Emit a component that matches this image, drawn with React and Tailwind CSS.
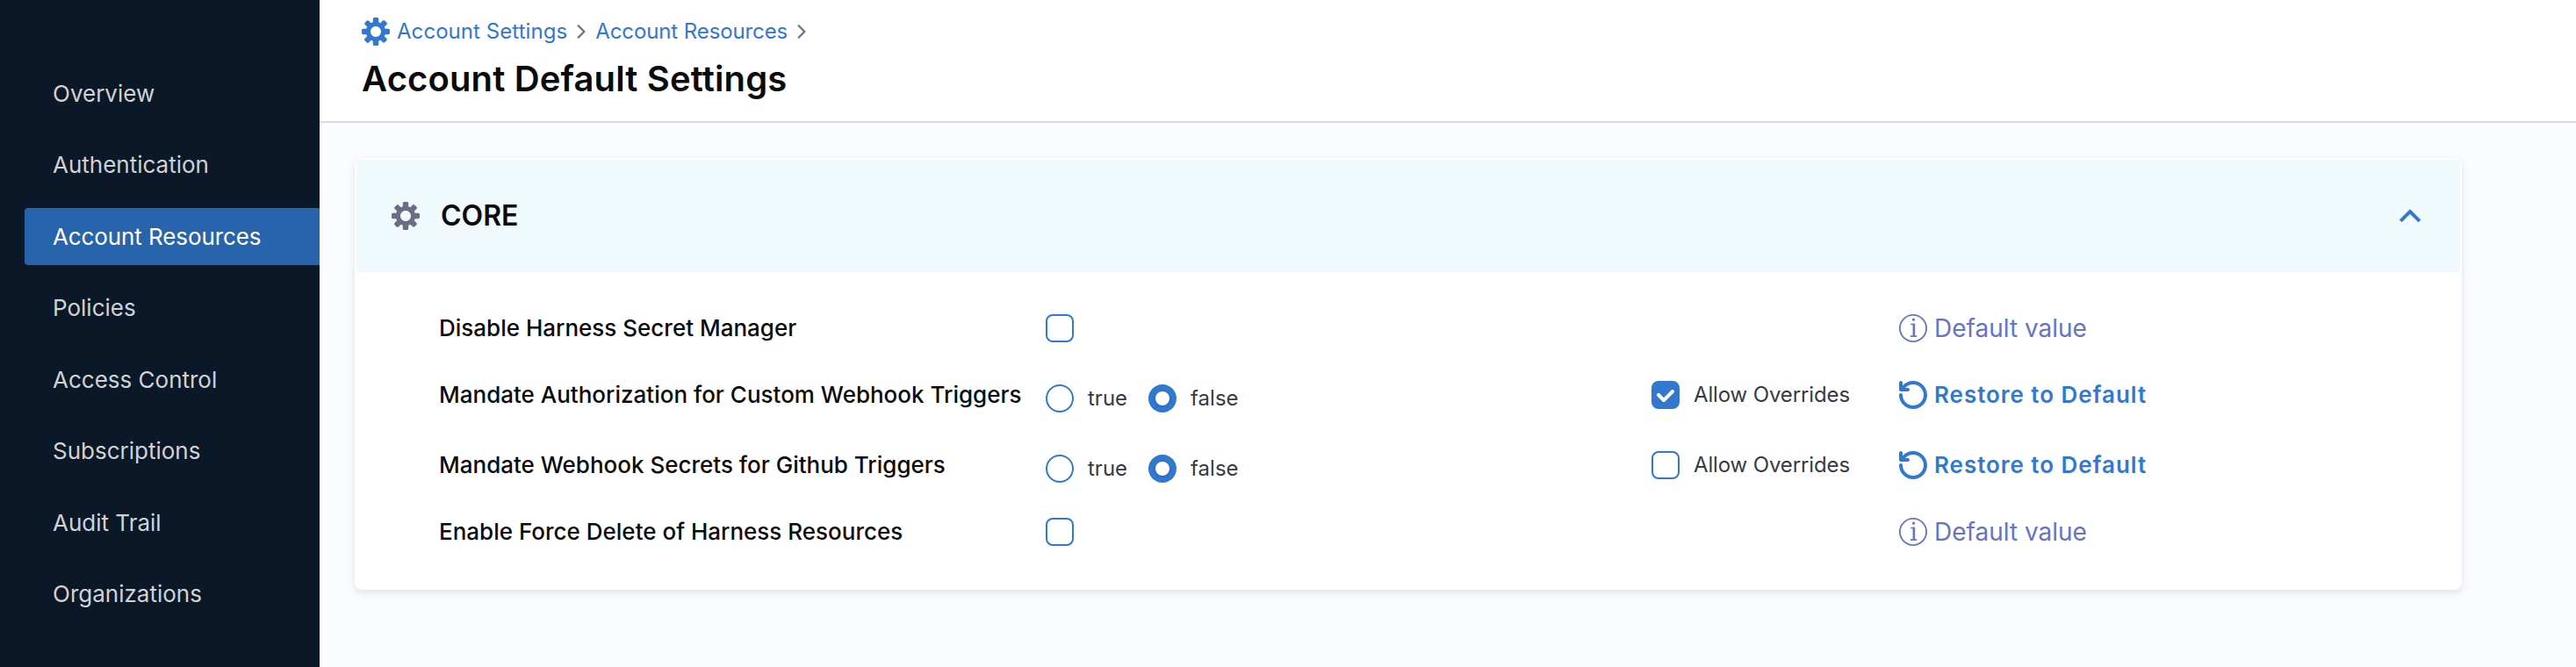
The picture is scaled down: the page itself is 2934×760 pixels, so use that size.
import clsx from "clsx";

const NAV = [
  "Overview",
  "Authentication",
  "Account Resources",
  "Policies",
  "Access Control",
  "Subscriptions",
  "Audit Trail",
  "Organizations",
];

const SETTINGS = [
  { label: "Disable Harness Secret Manager", type: "checkbox", height: "h-19" },
  { label: "Mandate Authorization for Custom Webhook Triggers", type: "radio", overrides: true, height: "h-19" },
  { label: "Mandate Webhook Secrets for Github Triggers", type: "radio", overrides: false, height: "h-21" },
  { label: "Enable Force Delete of Harness Resources", type: "checkbox", height: "h-17" },
];

function GearIcon({ className }) {
  return (
    <svg viewBox="0 0 16 16" fill="currentColor" className={clsx("size-8 shrink-0", className)}>
      <path
        fillRule="evenodd"
        clipRule="evenodd"
        d="M15.19 6.39h-1.85c-.11-.37-.27-.71-.45-1.04l1.36-1.36c.31-.31.31-.82 0-1.13l-1.13-1.13a.803.803 0 00-1.13 0l-1.36 1.36c-.33-.17-.67-.33-1.04-.44V.79c0-.44-.36-.8-.8-.8h-1.6c-.44 0-.8.36-.8.8v1.86c-.39.12-.75.28-1.1.47l-1.3-1.3c-.3-.3-.79-.3-1.09 0L1.82 2.91c-.3.3-.3.79 0 1.09l1.3 1.3c-.2.34-.36.7-.48 1.09H.79c-.44 0-.8.36-.8.8v1.6c0 .44.36.8.8.8h1.85c.11.37.27.71.45 1.04l-1.36 1.36c-.31.31-.31.82 0 1.13l1.13 1.13c.31.31.82.31 1.13 0l1.36-1.36c.33.18.67.33 1.04.44v1.86c0 .44.36.8.8.8h1.6c.44 0 .8-.36.8-.8v-1.86c.39-.12.75-.28 1.1-.47l1.3 1.3c.3.3.79.3 1.09 0l1.09-1.09c.3-.3.3-.79 0-1.09l-1.3-1.3c.19-.35.36-.71.48-1.1h1.85c.44 0 .8-.36.8-.8v-1.6a.816.816 0 00-.81-.79zm-7.2 4.6c-1.66 0-3-1.34-3-3s1.34-3 3-3 3 1.34 3 3-1.34 3-3 3z"
      />
    </svg>
  );
}

function CrumbChevron() {
  return (
    <svg viewBox="0 0 10 16" className="h-4 w-2.5 shrink-0 text-[#6b6d85]" fill="none" stroke="currentColor" strokeWidth="2.2" strokeLinecap="round" strokeLinejoin="round">
      <path d="M1.7 1.3 8.4 8l-6.7 6.7" />
    </svg>
  );
}

function ResetIcon() {
  return (
    <svg viewBox="0 0 16 16" fill="currentColor" className="size-8 shrink-0">
      <path d="M8 0C5.6 0 3.5 1 2 2.7V1c0-.5-.5-1-1-1S0 .4 0 1v4c0 .5.5 1 1 1h4c.6 0 1-.5 1-1s-.4-1-1-1H3.5C4.7 2.8 6.2 2 8 2c3.3 0 6 2.7 6 6s-2.7 6-6 6-6-2.7-6-6c0-.5-.4-1-1-1s-1 .5-1 1c0 4.4 3.6 8 8 8s8-3.6 8-8-3.6-8-8-8z" />
    </svg>
  );
}

function InfoIcon() {
  return (
    <svg viewBox="0 0 32 32" className="size-8 shrink-0" fill="none" stroke="currentColor">
      <circle cx="16" cy="16" r="15.1" strokeWidth="1.8" />
      <path d="M13.2 11.5h4M12.8 25.1h7.4" strokeWidth="1.7" />
      <path d="M16.9 10.7v14.6" strokeWidth="2.6" />
      <circle cx="16.5" cy="6.2" r="1.6" fill="currentColor" stroke="none" />
    </svg>
  );
}

function Checkbox({ checked }) {
  return (
    <span
      className={clsx(
        "flex size-8 shrink-0 items-center justify-center rounded-lg",
        checked ? "bg-[#3178d0] text-white" : "border-2 border-[#3178d0] bg-white"
      )}
    >
      {checked && (
        <svg viewBox="0 0 16 16" fill="currentColor" className="size-8">
          <path d="M12 5c-.28 0-.53.11-.71.29L7 9.59l-2.29-2.3a1.003 1.003 0 00-1.42 1.42l3 3c.18.18.43.29.71.29s.53-.11.71-.29l5-5A1.003 1.003 0 0012 5z" />
        </svg>
      )}
    </span>
  );
}

function Radio({ label, checked }) {
  return (
    <span className="flex items-center gap-4">
      <span
        className={clsx(
          "flex size-8 items-center justify-center rounded-full",
          checked ? "bg-[#3178d0]" : "border-2 border-[#3178d0] bg-white"
        )}
      >
        {checked && <span className="size-4 rounded-full bg-white shadow-[0_1px_3px_rgba(16,22,26,0.25)]" />}
      </span>
      <span className="pb-px text-[24px] leading-[29px] text-[#383946]">{label}</span>
    </span>
  );
}

function SettingRow({ label, type, overrides, height }) {
  return (
    <div className={clsx("flex items-center pl-[94px]", height)}>
      <div className="w-[691px] pb-px text-[26px] leading-[31px] font-medium whitespace-nowrap text-[#0b0b0d]">{label}</div>
      <div className="w-[690px]">
        {type === "checkbox" ? (
          <Checkbox />
        ) : (
          <div className="flex gap-6 pt-2">
            <Radio label="true" />
            <Radio label="false" checked />
          </div>
        )}
      </div>
      <div className="w-[282px]">
        {type === "radio" && (
          <div className="flex items-center gap-4">
            <Checkbox checked={overrides} />
            <span className="pb-px text-[24px] leading-[29px] tracking-[-0.13px] text-[#383946]">Allow Overrides</span>
          </div>
        )}
      </div>
      {type === "radio" ? (
        <div className="flex items-center gap-2 text-[#3178d0]">
          <ResetIcon />
          <span className="pb-px text-[26px] leading-[31px] font-semibold tracking-[0.95px]">Restore to Default</span>
        </div>
      ) : (
        <div className="flex items-center gap-2 text-[#6574c9]">
          <InfoIcon />
          <span className="text-[28px] leading-[34px]">Default value</span>
        </div>
      )}
    </div>
  );
}

export default function App() {
  return (
    <div className="flex h-[760px] w-full overflow-hidden bg-[#fbfcff] font-['Inter',sans-serif]">
      <aside className="flex w-[364px] shrink-0 flex-col gap-[16.5px] bg-[#0b1828] pt-[73.9px] pl-7">
        {NAV.map((item) => (
          <a
            key={item}
            className={clsx(
              "flex h-[65px] shrink-0 items-center rounded-l pl-8 text-[26px] leading-[31px]",
              item === "Account Resources" ? "bg-[#2864ab] tracking-[-0.1px] text-white" : "text-[#d0d2d4]"
            )}
          >
            {item}
          </a>
        ))}
      </aside>

      <main className="flex min-w-0 flex-1 flex-col">
        <header className="h-[140px] shrink-0 border-b-2 border-[#d9dae5] bg-white pt-5 pl-12">
          <div className="flex h-8 items-center text-[24px] leading-[29px] text-[#3178d0]">
            <GearIcon />
            <a className="pb-px pl-2 tracking-[0.06px]">Account Settings</a>
            <span className="pr-[11px] pl-[11px]">
              <CrumbChevron />
            </span>
            <a className="pb-px tracking-[-0.1px]">Account Resources</a>
            <span className="pl-[11px]">
              <CrumbChevron />
            </span>
          </div>
          <h1 className="mt-[13px] text-[40px] leading-[49px] font-semibold tracking-[0.13px] text-[#0b0b0d]">
            Account Default Settings
          </h1>
        </header>

        <section className="mt-10 ml-10 h-[492px] w-[2400px] rounded-lg border-2 border-white bg-white shadow-[0_0_2px_rgba(40,41,61,0.04),0_4px_10px_rgba(96,97,112,0.16)]">
          <div className="flex h-32 items-center bg-[#f0fafd] pr-11 pl-10">
            <GearIcon className="text-[#6b6d85]" />
            <h2 className="flex-1 pb-px pl-6 text-[32px] leading-[39px] font-semibold text-[#0b0b0d]">CORE</h2>
            <svg viewBox="0 0 26 16" className="h-4 w-[26px]" fill="none" stroke="#3178d0" strokeWidth="4">
              <path d="M2.2 13.8 13 3l10.8 10.8" />
            </svg>
          </div>
          <div className="pt-[26px]">
            {SETTINGS.map((setting) => (
              <SettingRow key={setting.label} {...setting} />
            ))}
          </div>
        </section>
      </main>
    </div>
  );
}
